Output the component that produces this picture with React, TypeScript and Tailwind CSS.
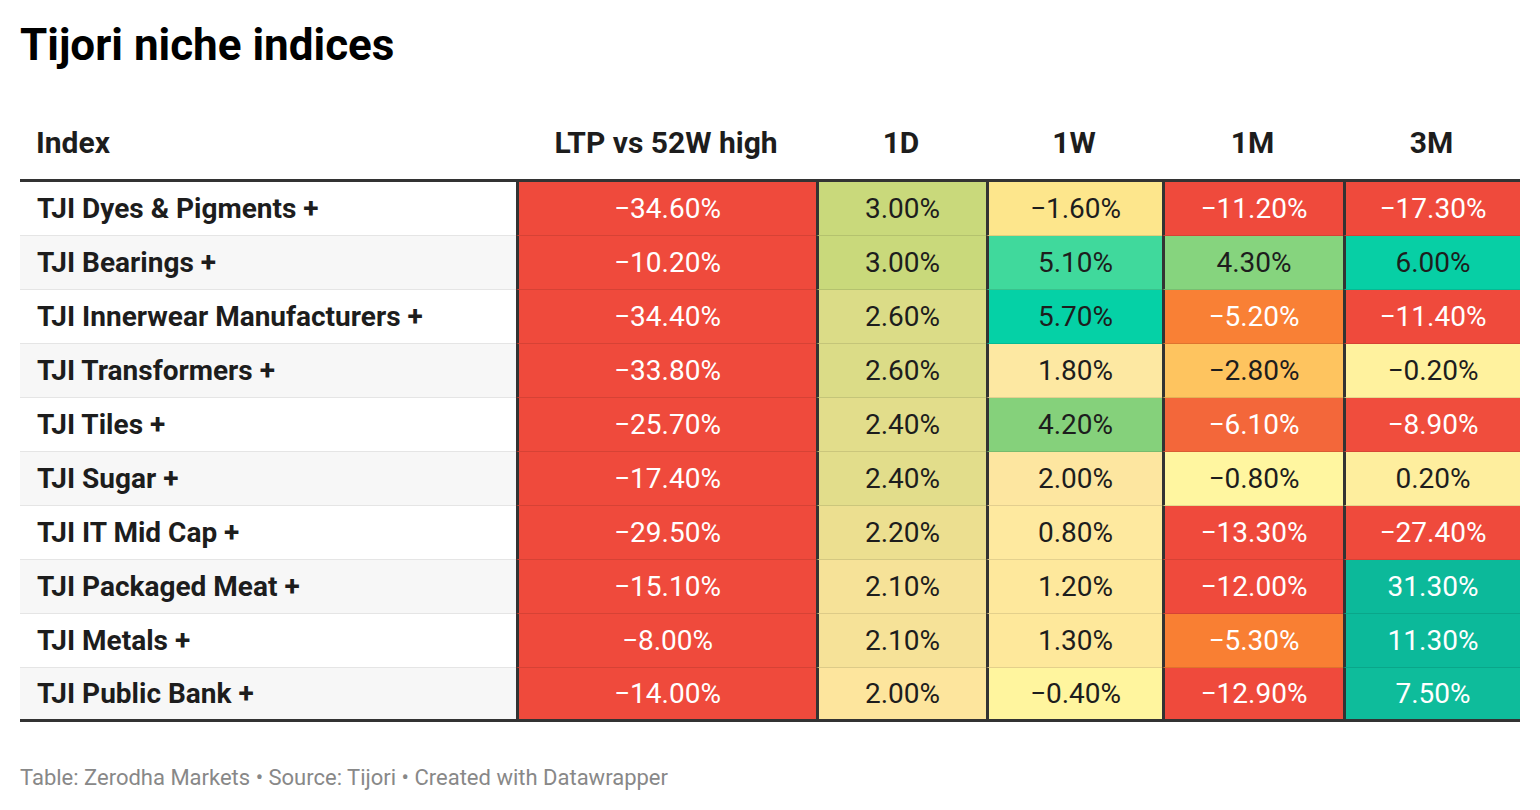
const rows: { name: string; cells: [string, string, boolean][] }[] = [
  {
    name: 'TJI Dyes & Pigments +',
    cells: [
      ['−34.60%', '#ef4a3c', true],
      ['3.00%', '#c9d97b', false],
      ['−1.60%', '#fde68c', false],
      ['−11.20%', '#ef4a3c', true],
      ['−17.30%', '#ef4a3c', true],
    ],
  },
  {
    name: 'TJI Bearings +',
    cells: [
      ['−10.20%', '#ef4a3c', true],
      ['3.00%', '#c9d97b', false],
      ['5.10%', '#40d99c', false],
      ['4.30%', '#86d47e', false],
      ['6.00%', '#07cfa5', false],
    ],
  },
  {
    name: 'TJI Innerwear Manufacturers +',
    cells: [
      ['−34.40%', '#ef4a3c', true],
      ['2.60%', '#dbdc87', false],
      ['5.70%', '#05d1a6', false],
      ['−5.20%', '#f98035', true],
      ['−11.40%', '#ef4a3c', true],
    ],
  },
  {
    name: 'TJI Transformers +',
    cells: [
      ['−33.80%', '#ef4a3c', true],
      ['2.60%', '#dbdc87', false],
      ['1.80%', '#fde8a2', false],
      ['−2.80%', '#fec45f', false],
      ['−0.20%', '#fff29e', false],
    ],
  },
  {
    name: 'TJI Tiles +',
    cells: [
      ['−25.70%', '#ef4a3c', true],
      ['2.40%', '#e2dd8b', false],
      ['4.20%', '#85d17b', false],
      ['−6.10%', '#f3673a', true],
      ['−8.90%', '#f04d3d', true],
    ],
  },
  {
    name: 'TJI Sugar +',
    cells: [
      ['−17.40%', '#ef4a3c', true],
      ['2.40%', '#e2dd8b', false],
      ['2.00%', '#fde6a0', false],
      ['−0.80%', '#fff6a0', false],
      ['0.20%', '#feee9e', false],
    ],
  },
  {
    name: 'TJI IT Mid Cap +',
    cells: [
      ['−29.50%', '#ef4a3c', true],
      ['2.20%', '#ecdf90', false],
      ['0.80%', '#fee99f', false],
      ['−13.30%', '#ef4a3c', true],
      ['−27.40%', '#ef4a3c', true],
    ],
  },
  {
    name: 'TJI Packaged Meat +',
    cells: [
      ['−15.10%', '#ef4a3c', true],
      ['2.10%', '#f6e298', false],
      ['1.20%', '#fee89c', false],
      ['−12.00%', '#ef4a3c', true],
      ['31.30%', '#0cb99a', true],
    ],
  },
  {
    name: 'TJI Metals +',
    cells: [
      ['−8.00%', '#ef4a3c', true],
      ['2.10%', '#f6e298', false],
      ['1.30%', '#fee89b', false],
      ['−5.30%', '#f97f33', true],
      ['11.30%', '#0cb99a', true],
    ],
  },
  {
    name: 'TJI Public Bank +',
    cells: [
      ['−14.00%', '#ef4a3c', true],
      ['2.00%', '#fde59d', false],
      ['−0.40%', '#fff59e', false],
      ['−12.90%', '#ef4a3c', true],
      ['7.50%', '#0ebc9b', true],
    ],
  },
];

const headers = ['LTP vs 52W high', '1D', '1W', '1M', '3M'];

export default function App() {
  return (
    <div
      className="w-[1540px] h-[810px] bg-white px-5 pt-[18px]"
      style={{ fontFamily: 'Roboto, "Liberation Sans", sans-serif' }}
    >
      <h1 className="text-[44px] leading-[54px] font-bold text-black">Tijori niche indices</h1>

      <div className="mt-[38px] w-[1500px] grid grid-cols-[496px_300px_170px_176px_181px_177px]">
        <div className="h-[72px] flex items-center pl-[16px] pb-[4px] text-[30px] font-bold text-[#1d1d1d] border-b-[3px] border-[#333333]">
          Index
        </div>
        {headers.map((h) => (
          <div
            key={h}
            className="h-[72px] flex items-center justify-center pb-[4px] text-[30px] font-bold text-[#1d1d1d] border-b-[3px] border-[#333333]"
          >
            {h}
          </div>
        ))}

        {rows.map((row, i) => {
          const last = i === rows.length - 1;
          return [
            <div
              key={row.name}
              className={`h-[54px] flex items-center pl-[17px] text-[28px] font-bold text-[#1d1d1d] ${
                i % 2 === 1 ? 'bg-[#f7f7f7]' : 'bg-white'
              } ${last ? 'border-b-[3px] border-[#333333]' : 'border-b border-[#e5e5e5]'}`}
            >
              {row.name}
            </div>,
            ...row.cells.map(([v, bg, light], j) => (
              <div
                key={row.name + j}
                className={`h-[54px] flex items-center justify-center text-[28px] border-l-[3px] border-l-[#333333] ${
                  light ? 'text-white' : 'text-[#1d1d1d]'
                } ${last ? 'border-b-[3px] border-b-[#333333]' : 'border-b border-b-black/10'}`}
                style={{ backgroundColor: bg }}
              >
                {v}
              </div>
            )),
          ];
        })}
      </div>

      <div className="mt-[39px] text-[22px] text-[#888888]">
        Table: Zerodha Markets • Source: Tijori • Created with Datawrapper
      </div>
    </div>
  );
}
